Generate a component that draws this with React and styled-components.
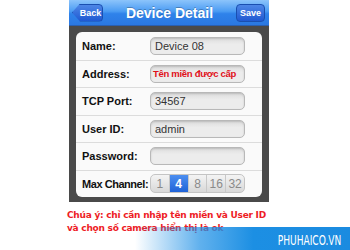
import React, { useState } from "react";
import styled, { createGlobalStyle } from "styled-components";

const GlobalStyle = createGlobalStyle`
  html, body { margin: 0; padding: 0; background: #fff; }
  body { font-family: "Liberation Sans", Arial, sans-serif; }
`;

const Page = styled.div`
  position: relative;
  width: 350px;
  height: 250px;
  overflow: hidden;
  background: #fff;
`;

const Phone = styled.div`
  margin-left: 69px;
  width: 200px;
  background: #4a4a4a;
  padding-bottom: 5px;
`;

const NavBar = styled.div`
  height: 26px;
  display: flex;
  align-items: center;
  justify-content: space-between;
  padding: 0 4px 0 3px;
  box-sizing: border-box;
  background: linear-gradient(#8cc4fb 0%, #4b9cf3 45%, #2f82ea 55%, #2a78e2 100%);
  border-bottom: 1px solid #2a5fb0;
`;

const NavTitle = styled.div`
  color: #fff;
  font-weight: bold;
  font-size: 14px;
  text-shadow: 0 -1px 0 rgba(0, 0, 0, 0.25);
`;

const NavButton = styled.button`
  height: 18px;
  border: 1px solid #1a4fb0;
  background: linear-gradient(#4d86e6, #1f59d2);
  color: #fff;
  font-family: inherit;
  font-weight: bold;
  font-size: 9px;
  clip-path: ${(p) =>
    p.$back ? "polygon(8px 0, 100% 0, 100% 100%, 8px 100%, 0 50%)" : "none"};
  border-radius: ${(p) => (p.$back ? "0 4px 4px 0" : "4px")};
  width: ${(p) => (p.$back ? "31px" : "29px")};
  padding: 0 0 0 ${(p) => (p.$back ? "6px" : "0")};
`;

const Card = styled.div`
  margin: 6px 7px 0 7px;
  background: #fafafa;
  border-radius: 6px;
  display: flex;
  flex-direction: column;
`;

const Row = styled.div`
  height: 27.5px;
  display: flex;
  align-items: center;
  padding: 0 17px 0 6px;
  border-top: ${(p) => (p.$first ? "none" : "1px solid #dcdcdc")};
  box-sizing: border-box;
`;

const Label = styled.div`
  width: 68px;
  flex-shrink: 0;
  font-weight: bold;
  font-size: 11px;
  letter-spacing: ${(p) => (p.$tight ? "-0.45px" : "0")};
  color: #111;
  white-space: nowrap;
`;

const Field = styled.div`
  flex: 1;
  min-width: 0;
  height: 16px;
  border: 1px solid #b8b8b8;
  border-radius: 5px;
  background: linear-gradient(#dcdcdc, #ececec 40%, #ececec);
  box-shadow: inset 0 1px 2px rgba(0, 0, 0, 0.15);
  display: flex;
  align-items: center;
  padding-left: ${(p) => (p.$hint ? "2px" : "4px")};
  font-size: ${(p) => (p.$hint ? "9.5px" : "11px")};
  font-weight: ${(p) => (p.$hint ? "bold" : "normal")};
  letter-spacing: ${(p) => (p.$hint ? "-0.3px" : "0")};
  color: ${(p) => (p.$hint ? "#e0101a" : "#333")};
  white-space: nowrap;
  overflow: hidden;
`;

const Segments = styled.div`
  flex: 1;
  display: flex;
  height: 17px;
  border-radius: 5px;
  overflow: hidden;
  border: 1px solid #c4c4c4;
  background: linear-gradient(#f4f4f4, #d8d8d8);
`;

const Segment = styled.div`
  flex: 1;
  display: flex;
  align-items: center;
  justify-content: center;
  font-size: 12px;
  color: ${(p) => (p.$active ? "#fff" : "#8a8a8a")};
  font-weight: ${(p) => (p.$active ? "bold" : "normal")};
  background: ${(p) => (p.$active ? "linear-gradient(#4c8ef0, #1f63d8)" : "transparent")};
  border-left: ${(p) => (p.$first ? "none" : "1px solid #c8c8c8")};
`;

const Note = styled.div`
  padding: 7px 0 0 67px;
  color: #ee1c25;
  font-family: "DejaVu Sans", Verdana, sans-serif;
  font-weight: bold;
  font-size: 9px;
  line-height: 13px;
  letter-spacing: -0.25px;
`;

const Banner = styled.div`
  position: absolute;
  right: 0;
  bottom: 0;
  width: 215px;
  height: 23px;
  background: linear-gradient(90deg, rgba(30, 144, 230, 0) 0%, rgba(30, 144, 230, 0.7) 30%, #1c8fe3 55%, #1b8be0 100%);
  display: flex;
  align-items: center;
  justify-content: flex-end;
  padding-right: 9px;
  box-sizing: border-box;
`;

const BannerText = styled.div`
  color: #fff;
  font-family: "DejaVu Sans Condensed", "DejaVu Sans", sans-serif;
  font-size: 14px;
  padding-top: 3px;
  transform: scaleX(0.72);
  transform-origin: right center;
`;

const channels = ["1", "4", "8", "16", "32"];

export default function App() {
  const [selected, setSelected] = useState("4");
  return (
    <Page>
      <GlobalStyle />
      <Phone>
        <NavBar>
          <NavButton $back>Back</NavButton>
          <NavTitle>Device Detail</NavTitle>
          <NavButton>Save</NavButton>
        </NavBar>
        <Card>
          <Row $first>
            <Label>Name:</Label>
            <Field>Device 08</Field>
          </Row>
          <Row>
            <Label>Address:</Label>
            <Field $hint>Tên miền được cấp</Field>
          </Row>
          <Row>
            <Label>TCP Port:</Label>
            <Field>34567</Field>
          </Row>
          <Row>
            <Label>User ID:</Label>
            <Field>admin</Field>
          </Row>
          <Row>
            <Label>Password:</Label>
            <Field />
          </Row>
          <Row>
            <Label $tight>Max Channel:</Label>
            <Segments>
              {channels.map((c, i) => (
                <Segment
                  key={c}
                  $first={i === 0}
                  $active={c === selected}
                  onClick={() => setSelected(c)}
                >
                  {c}
                </Segment>
              ))}
            </Segments>
          </Row>
        </Card>
      </Phone>
      <Note>
        Chúa ý: chỉ cần nhập tên miền và User ID
        <br />
        và chọn số camera hiển thị là ok
      </Note>
      <Banner>
        <BannerText>PHUHAICO.VN</BannerText>
      </Banner>
    </Page>
  );
}
